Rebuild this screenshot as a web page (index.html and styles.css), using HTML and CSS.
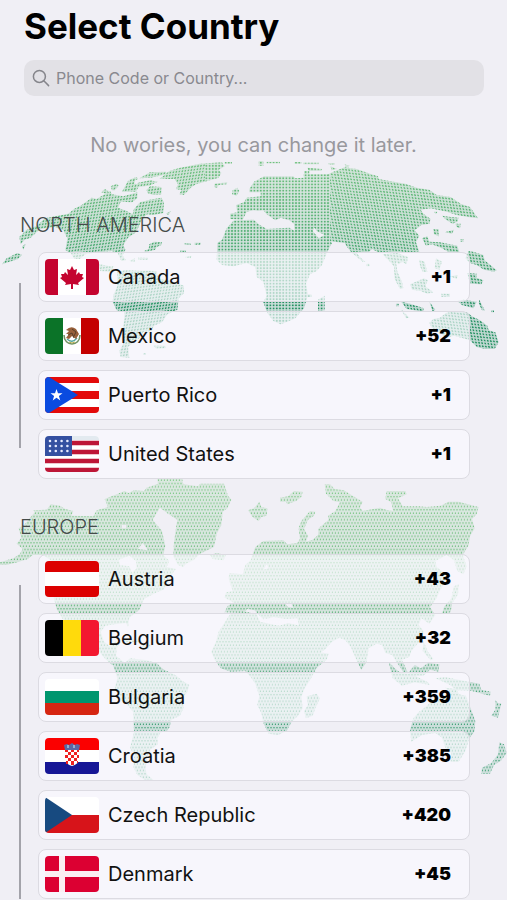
FILE: index.html
```html
<!DOCTYPE html>
<html lang="en">
<head>
<meta charset="utf-8">
<meta name="viewport" content="width=device-width, initial-scale=1">
<title>Select Country</title>
<link rel="stylesheet" href="styles.css">
</head>
<body>
<svg class="world" viewBox="0 0 507 900" aria-hidden="true">
  <defs>
    <pattern id="dots-left" width="3" height="3" patternUnits="userSpaceOnUse" patternTransform="skewY(-7) skewX(-12)"><rect width="3" height="3" fill="#3c3c3c"/><circle cx="1.5" cy="1.5" r=".9" fill="#fff"/></pattern>
    <pattern id="dots-mid" width="3.2" height="3.1" patternUnits="userSpaceOnUse"><rect width="4" height="4" fill="#303030"/><circle cx="1.6" cy="1.6" r="1" fill="#fff"/></pattern>
    <pattern id="dots-right" width="3.1" height="3" patternUnits="userSpaceOnUse" patternTransform="skewY(6) skewX(12)"><rect width="4" height="3" fill="#3c3c3c"/><circle cx="1.5" cy="1.5" r=".9" fill="#fff"/></pattern>
    <pattern id="dots-flat" width="3" height="6.600" patternUnits="userSpaceOnUse"><rect width="3" height="7" fill="#303030"/><circle cx="1" cy="1.600" r=".75" fill="#fff"/><circle cx="2.500" cy="4.900" r=".75" fill="#fff"/></pattern>
    <mask id="globe-dots" maskUnits="userSpaceOnUse" x="0" y="140" width="507" height="240"><rect y="140" width="205" height="240" fill="url(#dots-left)"/><rect x="205" y="140" width="125" height="240" fill="url(#dots-mid)"/><rect x="330" y="140" width="177" height="240" fill="url(#dots-right)"/></mask>
    <mask id="flat-dots" maskUnits="userSpaceOnUse" x="0" y="470" width="507" height="330"><rect y="470" width="507" height="330" fill="url(#dots-flat)"/></mask>
    <linearGradient id="globe-fill" gradientUnits="userSpaceOnUse" x1="0" y1="0" x2="0" y2="600"><stop offset="0" stop-color="#71c27f"/><stop offset=".4" stop-color="#50ad72"/><stop offset=".75" stop-color="#239061"/></linearGradient>
    <linearGradient id="flat-fill" gradientUnits="userSpaceOnUse" x1="0" y1="0" x2="0" y2="930"><stop offset="0" stop-color="#7bc983"/><stop offset=".3" stop-color="#62b774"/><stop offset=".8" stop-color="#2f986a"/></linearGradient>
  </defs>

  <g mask="url(#globe-dots)"><g transform="translate(0 155) scale(.33333)" fill="url(#globe-fill)">
    <!-- North America -->
    <path d="M58 246L78 226L110 212L135 190L205 176L222 162L245 150L275 128L290 132L330 108L336 118L370 124L412 112L412 130L396 142L362 140L354 158L380 168L398 178L402 162L420 142L450 134L484 128L492 142L490 174L462 180L440 178L424 198L408 232L384 248L370 270L376 284L368 302L378 316L364 318L352 292L334 288L300 292L258 296L240 312L256 318L300 328L330 334L326 350L300 342L268 324L226 316L212 294L196 286L202 250L190 226L164 216L120 222L92 248L74 254L62 268Z"/>
    <path d="M6 328L20 310L52 294L66 300L54 312ZM66 274L78 266L70 284ZM304 112L314 102L326 108L318 116ZM332 94L350 86L356 92L344 106L336 106ZM366 110L384 78L408 70L402 86L420 88L408 110ZM388 74L410 66L414 72L396 80ZM418 70L450 52L498 50L500 58L452 68ZM412 84L450 76L474 80L448 92L412 96ZM440 104L450 94L484 96L484 118L460 120L442 114Z"/>
    <path d="M478 72L508 48L540 38L600 26L666 22L674 34L656 44L664 54L656 68L630 76L588 88L572 98L552 120L538 118L544 106L528 102L534 88L524 72Z"/>
    <path d="M644 86L682 82L680 88L656 90L652 98L642 96ZM674 21H696V26H674ZM432 288L446 282L448 268L462 260L486 262L484 270L470 276L466 284L440 290ZM498 176L512 168L506 180ZM554 264H572V270H554ZM584 263H602V269H584ZM540 286H558V292H540ZM388 318L404 310V320ZM414 308H444V314H414ZM554 306L574 302L572 310ZM300 338L340 334L336 350L300 348Z"/>
    <!-- South America -->
    <path d="M352 352L372 346L470 348L474 370L510 378L552 392L552 414L536 430L532 464L502 478L486 502L462 512L454 528L430 530L420 548L402 560L384 576L388 608L362 606L358 588L372 562L370 520L374 470L350 466L338 440L340 420L352 394Z"/>
    <path d="M460 572H496V580H468ZM430 594H438V600H430Z"/>
    <!-- Africa -->
    <path d="M702 196L762 194L776 208L800 222L868 218L884 228L938 228L956 250L974 240L996 264L982 290L966 330L950 348L930 358L918 386L924 420L912 460L886 490L862 500L842 508L820 498L802 474L790 442L800 422L790 380L770 366L766 336L740 324L700 334L666 330L650 314L652 264L666 254L680 220Z"/>
    <path d="M954 434L974 422V466L954 470ZM920 418H934V426H920Z"/>
    <!-- Eurasia -->
    <path d="M748 102L762 80L792 64L880 64L886 70L912 68L910 58L984 58L1000 50L1036 36L1052 40L1070 42L1110 56L1134 64L1136 72L1180 80L1216 86L1250 98L1288 104L1310 120L1352 126L1382 146L1410 156L1434 190L1404 186L1370 180L1340 170L1292 160L1262 164L1270 176L1292 192L1288 206L1264 210L1244 226L1258 242L1248 262L1258 290L1230 294L1198 290L1186 296L1160 294L1132 290L1116 282L1104 294L1070 294L1082 308L1096 320L1088 320L1056 294L1044 280L1034 264L984 258L974 240L950 228L944 218L936 230L884 228L882 206L868 196L842 188L826 196L800 178L790 166L774 168L762 166L740 170L728 194L690 192L690 176L712 172L708 150L732 142L740 128L782 124L782 112L748 112Z"/>
    <path d="M698 106L712 98L718 108L710 122L696 118ZM776 18H790V32H776ZM800 20H840V25H800ZM884 21H904V26H884ZM910 23H956V28H910ZM922 38L966 42L964 48L926 48ZM912 48H928V58H912ZM986 24H1004V29H986ZM992 34L1010 42L994 46ZM1034 28L1050 32L1038 36Z"/>
    <path d="M1302 170H1312L1308 178ZM1326 182L1352 186L1376 188L1372 200L1358 206L1338 194ZM1366 206H1382L1380 220L1370 216ZM1300 222H1316V244L1302 238ZM1334 232L1362 224L1356 236ZM1266 250L1282 244L1288 260L1320 262L1372 272L1378 292L1350 294L1326 280L1296 268L1278 272ZM1382 252H1390V260H1382ZM1406 288L1420 290L1450 300L1454 316L1490 346L1482 350L1452 344L1430 330L1410 324L1396 310Z"/>
    <path d="M1148 298L1192 294L1224 306L1220 328L1206 320L1196 328L1188 320L1192 350L1206 380L1210 400L1200 402L1184 372L1182 334L1168 318ZM1100 326H1108V334H1100ZM1258 314L1274 320L1282 350L1268 350L1260 334ZM1308 310L1326 320L1318 344L1304 340ZM1230 388L1272 370L1284 376L1276 394L1300 412L1282 416L1262 408L1236 404ZM1402 354L1430 356L1430 368L1450 376L1444 388L1410 386ZM1350 364L1374 360L1370 372ZM1204 440L1230 446L1272 460L1268 470L1220 462ZM1188 446H1196V454H1188ZM1288 440L1306 464L1298 470ZM1204 464L1228 488L1218 490ZM1324 416H1350V426H1324Z"/>
    <!-- Australia -->
    <path d="M1288 504L1300 492L1320 488L1338 474L1368 468L1400 472L1416 484L1440 496L1462 512L1466 526L1486 532L1496 562L1484 582L1454 582L1430 576L1410 556L1390 550L1362 542L1338 548L1316 530L1296 518Z"/>
    <path d="M1372 438L1390 434L1430 440L1420 460L1386 450ZM1438 434L1454 466L1446 466L1436 444ZM1474 466H1482V472H1474Z"/>
  </g></g>

  <g mask="url(#flat-dots)"><g transform="translate(0 475) scale(.33333)" fill="url(#flat-fill)">
    <!-- North America and Greenland -->
    <path d="M0 262L40 250L60 236L68 222L50 206L64 188L56 160L72 150L104 112L100 106L140 104L152 88L180 92L196 102L220 108L214 122L280 124L290 106L324 96L314 72L374 48L386 54L402 46L432 48L440 38L474 26L472 10H546L550 28L594 34L600 26H672L684 62L694 74L682 100L668 110L664 150L650 176L642 216L600 236L580 256L558 266L550 276L534 270L520 244L522 202L528 160L532 134L504 116L480 98L458 134L486 168L496 212L490 240L508 258L500 276L528 282L520 292L504 324L490 344L466 354L432 372L418 404L388 428L384 456L378 444L354 446L316 452L302 470L312 500L330 514L346 500L362 502L350 520L348 542L370 560L392 572L374 574L336 570L316 552L296 528L262 514L230 480L214 442L188 432L170 402L162 372L160 330L172 290L160 260L128 240L98 240L84 252L52 262L18 270H0Z"/>
    <path d="M388 242L356 254L360 270L388 274L396 294L410 280L408 258ZM428 204L414 222L444 226ZM366 150H378V160H366Z" fill="#f0eff5"/>
    <path d="M372 494H424V502H372ZM428 506L456 510L444 522L426 518ZM630 240L650 234L678 240L670 256L638 252Z"/>
    <!-- South America -->
    <path d="M340 572L370 568L390 550L440 556L470 564L488 582L530 602L544 616L568 630L562 652L552 664L550 700L540 722L514 734L508 758L498 770L482 772L472 790L474 808L450 824L442 850L436 880L440 898L460 914L436 916L412 900L400 876L404 840L390 820L402 770L400 712L386 694L362 674L344 640L352 610Z"/>
    <!-- Africa -->
    <path d="M690 418L740 410L770 418L780 440L838 452L862 444L910 454L928 478L944 504L960 532L986 536L980 554L950 578L932 612L914 640L904 666L908 700L894 722L874 742L860 768L834 780L806 776L790 744L784 714L772 690L778 662L766 626L752 606L736 588L692 590L662 580L644 554L634 530L648 500L656 470Z"/>
    <path d="M950 656L960 670L946 700L938 722L918 730L912 708L924 690L920 664Z"/>
    <!-- Eurasia -->
    <path d="M674 412L682 394L700 382L674 368L678 352L698 348L692 330L686 310L688 294L728 298L736 270L752 256L766 216L790 198L850 196L862 208L892 204L900 192L896 160L904 138L930 108L946 110L942 122L924 134L912 162L924 182L918 200L938 194L954 180L956 160L986 134L984 122L1006 108L1020 82L1000 78L978 56L974 28H990L1004 42L1032 46L1060 64L1088 80L1080 98L1088 108L1140 98L1162 106L1180 108L1174 82L1156 72L1160 48H1216L1220 58L1194 70L1208 94L1258 94L1280 96L1322 92L1346 80H1376L1404 88L1436 96L1430 118L1416 132L1424 160L1410 184L1406 210L1388 240L1400 274L1390 298L1372 288L1362 256L1340 240L1306 258L1310 276L1330 292L1338 316L1318 350L1310 370L1290 396L1306 420L1288 446L1264 430L1256 450L1272 470L1258 500L1234 528L1228 546L1206 554L1222 590L1210 592L1192 564L1176 540L1156 534L1146 510L1130 506L1106 520L1100 560L1084 584L1068 552L1052 516L1036 496L1018 488L996 500L974 524L938 548L930 520L900 466L892 430L858 432L820 426L792 434L776 420L764 406L742 402L732 414Z"/>
    <path d="M744 106L762 100L778 80L784 96L802 100L800 122L784 126L776 138L758 126ZM840 68L864 64L882 48L908 50L904 66L888 78L862 88L858 80L840 80ZM1376 328L1374 358L1356 386L1352 412L1326 416L1332 396L1354 370L1362 334ZM1270 498L1284 530L1300 552L1292 556L1268 528Z"/>
    <path d="M790 430L836 436L862 446L826 450L794 442ZM800 268L790 284L806 280ZM856 386L864 396L880 398L874 384Z" fill="#f0eff5"/>
    <!-- South-East Asia and Oceania -->
    <path d="M1166 560L1184 580L1202 594L1234 596L1284 622L1290 630L1244 622L1206 632L1178 610ZM1226 592L1244 570L1262 580L1284 564L1318 568L1316 590L1290 584L1270 602L1234 602ZM1306 610L1336 606L1382 616L1438 626L1444 644L1472 650L1470 662L1446 656L1416 648L1372 646L1346 628ZM1486 676L1494 684L1504 686L1494 728L1474 722L1486 704ZM1336 638L1370 642L1378 660L1364 664Z"/>
    <path d="M1240 730L1256 712L1284 690L1300 672L1330 664L1348 650L1376 658L1398 662L1412 700L1426 738L1424 768L1408 790L1396 828L1376 860H1352L1354 834L1336 818L1326 788L1306 774L1266 780L1234 800L1230 766Z"/>
    <path d="M1498 802L1512 808L1520 834L1502 858L1482 870L1470 896H1444L1446 878L1474 864L1494 838Z"/>
  </g></g>
</svg>

<main class="page">
  <h1>Select Country</h1>
  <label class="search">
    <svg viewBox="0 0 18 18" aria-hidden="true"><circle cx="7.400" cy="7.400" r="6"/><path d="M11.800 11.800l4.800 4.800"/></svg>
    <input type="search" placeholder="Phone Code or Country..." aria-label="Phone code or country">
  </label>
  <p class="hint">No wories, you can change it later.</p>

  <section class="region">
    <h2>NORTH AMERICA</h2>
    <ul class="list">
      <li><button class="card" type="button">
        <svg class="flag" viewBox="0 0 54 36" aria-hidden="true"><path fill="#fff" d="M0 0h54v36H0z"/><path fill="#c4042f" d="M0 0h13v36H0zM41 0h13v36H41zM27 7l2 4 3-1-1 6 3-3 1 2 3 0-1 3 2 1-6 5 1 2-6-1v5h-2v-5l-6 1 1-2-6-5 2-1-1-3 3 0 1-2 3 3-1-6 3 1z"/></svg>
        <span class="name">Canada</span><span class="code">+1</span></button></li>
      <li><button class="card" type="button">
        <svg class="flag" viewBox="0 0 54 36" aria-hidden="true"><path fill="#fff" d="M0 0h54v36H0z"/><path fill="#0b7328" d="M0 0h18v36H0z"/><path fill="#c40000" d="M36 0h18v36H36z"/><path d="M19 17c0 12 16 12 16 0" fill="none" stroke="#719262" stroke-width="1.600"/><path d="M22 21q5 5 10-1" fill="none" stroke="#55a7a0" stroke-width="1.400"/><path d="M21 12q5-5 10-1l3 5-3 5-4-3-3 3-3-1 3-4-3 0 3-3z" fill="#98603a"/><path d="M27 11l4 3-2 4M23 17l4-2 2 5" fill="none" stroke="#573f28"/><path d="M24 24q3 2 6 0" stroke="#b9b052" fill="none"/></svg>
        <span class="name">Mexico</span><span class="code">+52</span></button></li>
      <li><button class="card" type="button">
        <svg class="flag" viewBox="0 0 54 36" aria-hidden="true"><path fill="#fff" d="M0 0h54v36H0z"/><path fill="#e30a0a" d="M0 0h54v6H0zM0 14h54v8H0zM0 30h54v6H0z"/><path fill="#0a4be0" d="M0 0h4l29 18L4 36H0z"/><path fill="#fff" d="M11.500 12l1.500 4.300h4.500l-3.600 2.700 1.400 4.400-3.800-2.700-3.800 2.700L9.100 19l-3.600-2.700H10z"/></svg>
        <span class="name">Puerto Rico</span><span class="code">+1</span></button></li>
      <li><button class="card" type="button">
        <svg class="flag" viewBox="0 0 54 36" aria-hidden="true"><path fill="#fff" d="M0 0h54v36H0z"/><path fill="#e3eaf0" d="M0 0h54v4H0z"/><path stroke="#bd1637" stroke-width="4.500" d="M0 7h54M0 16h54M0 25h54M0 34h54"/><path fill="#3450a1" d="M0 0h27v20H0z"/><path d="M5 5h20M5 10h20M5 15h20" stroke="#e5eaff" stroke-width="2.600" stroke-linecap="round" stroke-dasharray="0 5.800"/></svg>
        <span class="name">United States</span><span class="code">+1</span></button></li>
    </ul>
  </section>

  <section class="region more">
    <h2>EUROPE</h2>
    <ul class="list">
      <li><button class="card" type="button">
        <svg class="flag" viewBox="0 0 54 36" aria-hidden="true"><path fill="#dc0000" d="M0 0h54v36H0z"/><path fill="#fff" d="M0 11h54v14H0z"/></svg>
        <span class="name">Austria</span><span class="code">+43</span></button></li>
      <li><button class="card" type="button">
        <svg class="flag" viewBox="0 0 54 36" aria-hidden="true"><path d="M0 0h18v36H0z"/><path fill="#ffda0c" d="M18 0h18v36H18z"/><path fill="#f31830" d="M36 0h18v36H36z"/></svg>
        <span class="name">Belgium</span><span class="code">+32</span></button></li>
      <li><button class="card" type="button">
        <svg class="flag" viewBox="0 0 54 36" aria-hidden="true"><path fill="#fff" d="M0 0h54v12H0z"/><path fill="#00966e" d="M0 12h54v12H0z"/><path fill="#d62612" d="M0 24h54v12H0z"/></svg>
        <span class="name">Bulgaria</span><span class="code">+359</span></button></li>
      <li><button class="card" type="button">
        <svg class="flag" viewBox="0 0 54 36" aria-hidden="true"><path fill="#fff" d="M0 12h54v12H0z"/><path fill="#fb0000" d="M0 0h54v12H0z"/><path fill="#171796" d="M0 24h54v12H0z"/><path fill="#fff" d="M20 11h14v10q0 5-7 7-7-2-7-7z"/><path fill="#f02020" d="M20 11h3v3h-3zM26 11h3v3h-3zM32 11h2v3h-2zM23 14h3v3h-3zM29 14h3v3h-3zM20 17h3v3h-3zM26 17h3v3h-3zM32 17h2v3h-2zM23 20h3v3h-3zM29 20h3v3h-3zM21 23h2v3h-2zM26 23h3v4h-3zM32 23h1v2h-1z"/><path fill="#5a67a3" d="M19 7l3-1 2 1 3-2 3 2 2-1 3 1-1 5H20z"/><path fill="#91afd0" d="M22 7h2v3h-2zM28 7h2v3h-2z"/></svg>
        <span class="name">Croatia</span><span class="code">+385</span></button></li>
      <li><button class="card" type="button">
        <svg class="flag" viewBox="0 0 54 36" aria-hidden="true"><path fill="#fff" d="M0 0h54v18H0z"/><path fill="#d7141a" d="M0 18h54v18H0z"/><path fill="#174a80" d="M0 0l27 18L0 36z"/></svg>
        <span class="name">Czech Republic</span><span class="code">+420</span></button></li>
      <li><button class="card" type="button">
        <svg class="flag" viewBox="0 0 54 36" aria-hidden="true"><path fill="#dc0032" d="M0 0h54v36H0z"/><path fill="#fbeef2" d="M14 0h6v36h-6zM0 15h54v6H0z"/></svg>
        <span class="name">Denmark</span><span class="code">+45</span></button></li>
    </ul>
  </section>
</main>
</body>
</html>
```
FILE: styles.css
```css
* {
  box-sizing: border-box;
}

body {
  margin: 0;
  position: relative;
  background: #f0eff5;
  color: #111;
  font-family: Inter, "Liberation Sans", sans-serif;
}

.world {
  position: absolute;
  top: 0;
  left: 0;
  width: 100%;
}

.page {
  position: relative;
  padding: 6px 0 1px;
}

h1 {
  margin: 0 24px 14px;
  color: #000;
  font-size: 35px;
  line-height: 40px;
  font-weight: 700;
}

.search {
  display: flex;
  align-items: center;
  gap: 6px;
  height: 36px;
  margin: 0 23px 0 24px;
  padding: 0 8px;
  border-radius: 10px;
  background: #e2e1e6;
}

.search svg {
  width: 18px;
  height: 18px;
  fill: none;
  stroke: #85858b;
  stroke-width: 1.5;
  stroke-linecap: round;
}

.search input {
  flex: 1;
  min-width: 0;
  padding: 0;
  border: 0;
  outline: 0;
  background: none;
  color: #111;
  font: 400 16px/24px Inter, "Liberation Sans", sans-serif;
}

.search input::placeholder {
  color: #89898f;
  opacity: 1;
}

.hint {
  margin: 36px 0 0;
  color: #98989d;
  font-size: 20px;
  line-height: 26px;
  text-align: center;
}

.region {
  position: relative;
  padding: 54px 37px 0 38px;
}

.region + .region {
  padding-top: 35px;
}

.region::before {
  content: "";
  position: absolute;
  left: 19px;
  top: 125px;
  bottom: 31px;
  width: 2px;
  background: #a3a3aa;
}

.region.more::before {
  top: 106px;
  bottom: 0;
}

h2 {
  margin: 0 0 14px -18px;
  color: #444a49;
  font-size: 20px;
  line-height: 26px;
  font-weight: 300;
}

.list {
  display: grid;
  gap: 9px;
  margin: 0;
  padding: 0;
  list-style: none;
}

.card {
  display: flex;
  align-items: center;
  gap: 9px;
  width: 100%;
  padding: 6px 18px 6px 6px;
  border: 1px solid #dcdbe2;
  border-radius: 8px;
  background: rgba(250, 250, 255, 0.64);
  color: inherit;
  font: 400 20px/24px Inter, "Liberation Sans", sans-serif;
  text-align: left;
}

.flag {
  width: 54px;
  height: 36px;
  border-radius: 4px;
}

.name {
  flex: 1;
}

.code {
  color: #000;
  font-size: 18px;
  font-weight: 900;
}
```
